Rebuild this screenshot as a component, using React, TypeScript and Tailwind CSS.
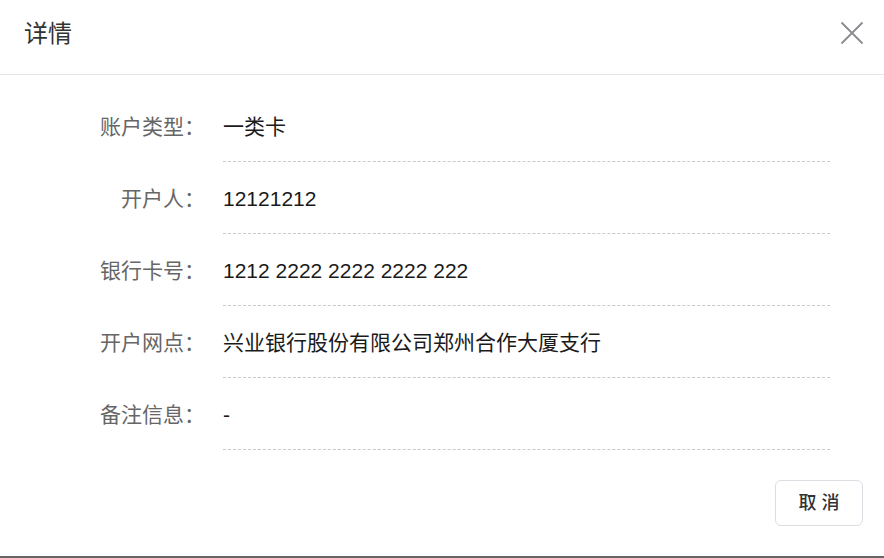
import React from 'react';

const rows: { label: string; value: string }[] = [
  { label: '账户类型：', value: '一类卡' },
  { label: '开户人：', value: '12121212' },
  { label: '银行卡号：', value: '1212 2222 2222 2222 222' },
  { label: '开户网点：', value: '兴业银行股份有限公司郑州合作大厦支行' },
  { label: '备注信息：', value: '-' },
];

const App: React.FC = () => {
  return (
    <div
      className="h-[558px] w-[884px] bg-white flex flex-col"
      style={{ fontFamily: '"Liberation Sans", "Noto Sans CJK SC", sans-serif' }}
    >
      {/* header */}
      <div className="h-[75px] flex justify-between border-b border-[#e4e4ea] pl-6 pr-[20px]">
        <div className="pt-[22px] text-[24px] leading-[24px] text-[#333]">详情</div>
        <button className="mt-[21px] w-[24px] h-[24px] flex items-center justify-center text-[#8a8a90]">
          <svg width="24" height="24" viewBox="0 0 24 24" fill="none" stroke="currentColor" strokeWidth="1.8">
            <path d="M1.5 1.5 L22.5 22.5 M22.5 1.5 L1.5 22.5" />
          </svg>
        </button>
      </div>

      {/* body */}
      <div className="pt-[15px] flex flex-col">
        {rows.map((r) => (
          <div key={r.label} className="flex h-[72px]">
            <div className="w-[205px] pt-[28px] text-right text-[21px] leading-[18px] text-[#666]">{r.label}</div>
            <div className="ml-[18px] w-[607px] pt-[28px] border-b border-dashed border-[#c8c8cc] text-[21px] leading-[18px] text-[#1a1a1a]">
              {r.value}
            </div>
          </div>
        ))}
      </div>

      {/* footer */}
      <div className="flex justify-end pr-[21px] pt-[30px]">
        <button className="w-[88px] h-[46px] rounded-md border border-[#dcdce2] bg-white text-[18px] font-medium text-[#333]">
          取 消
        </button>
      </div>

      <div className="flex-1" />
      <div className="h-[2px] bg-[#666]" />
    </div>
  );
};

export default App;
